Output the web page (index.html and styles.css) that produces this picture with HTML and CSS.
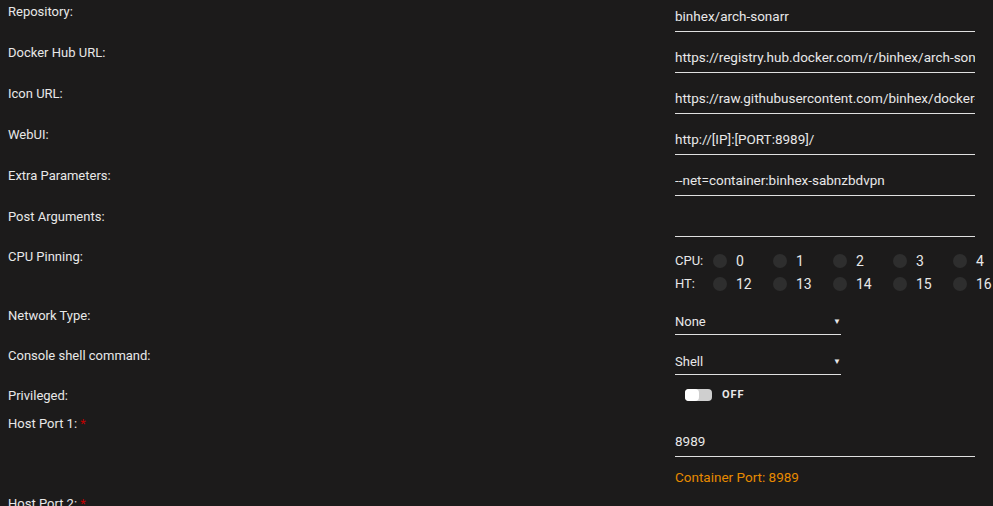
FILE: index.html
```html
<!DOCTYPE html>
<html lang="en">
<head>
  <meta charset="UTF-8" />
  <title>Update Container</title>
  <link rel="stylesheet" href="styles.css">
</head>
<body>
  <div class="form">
    <div class="row">
      <div class="label">Repository:</div>
      <div class="field"><input class="text" type="text" value="binhex/arch-sonarr"></div>
    </div>
    <div class="row">
      <div class="label">Docker Hub URL:</div>
      <div class="field"><input class="text" type="text" value="https://registry.hub.docker.com/r/binhex/arch-sonarr/"></div>
    </div>
    <div class="row">
      <div class="label">Icon URL:</div>
      <div class="field"><input class="text" type="text" value="https://raw.githubusercontent.com/binhex/docker-templates/master/binhex/images/sonarr-icon.png"></div>
    </div>
    <div class="row">
      <div class="label">WebUI:</div>
      <div class="field"><input class="text" type="text" value="http://[IP]:[PORT:8989]/"></div>
    </div>
    <div class="row">
      <div class="label">Extra Parameters:</div>
      <div class="field"><input class="text" type="text" value="--net=container:binhex-sabnzbdvpn"></div>
    </div>
    <div class="row">
      <div class="label">Post Arguments:</div>
      <div class="field"><input class="text" type="text" value=""></div>
    </div>

    <div class="row cpu-row">
      <div class="label">CPU Pinning:</div>
      <div class="field">
        <div class="cpu-line">
          <span class="cpu-name">CPU:</span>
          <span class="core"><i class="dot"></i>0</span>
          <span class="core"><i class="dot"></i>1</span>
          <span class="core"><i class="dot"></i>2</span>
          <span class="core"><i class="dot"></i>3</span>
          <span class="core"><i class="dot"></i>4</span>
        </div>
        <div class="cpu-line">
          <span class="cpu-name">HT:</span>
          <span class="core"><i class="dot"></i>12</span>
          <span class="core"><i class="dot"></i>13</span>
          <span class="core"><i class="dot"></i>14</span>
          <span class="core"><i class="dot"></i>15</span>
          <span class="core"><i class="dot"></i>16</span>
        </div>
      </div>
    </div>

    <div class="row select-row">
      <div class="label">Network Type:</div>
      <div class="field"><div class="select"><span>None</span><span class="arrow">&#9660;</span></div></div>
    </div>
    <div class="row select-row">
      <div class="label">Console shell command:</div>
      <div class="field"><div class="select"><span>Shell</span><span class="arrow">&#9660;</span></div></div>
    </div>

    <div class="row switch-row">
      <div class="label">Privileged:</div>
      <div class="field">
        <span class="switch"><span class="knob"></span></span>
        <span class="switch-text">OFF</span>
      </div>
    </div>

    <div class="row port-row">
      <div class="label">Host Port 1: <span class="req">*</span></div>
      <div class="field">
        <input class="text" type="text" value="8989">
        <div class="hint">Container Port: 8989</div>
      </div>
    </div>
    <div class="row port-row">
      <div class="label">Host Port 2: <span class="req">*</span></div>
      <div class="field"></div>
    </div>
  </div>
</body>
</html>
```

FILE: styles.css
```css
* { margin: 0; padding: 0; box-sizing: border-box; }

body {
  background: #1c1b1b;
  color: #e8e8e8;
  font-family: Roboto, "Noto Sans", sans-serif;
  font-size: 13px;
  overflow: hidden;
}

.row {
  display: grid;
  grid-template-columns: 675px 300px;
  height: 41px;
}

.label {
  padding-left: 8px;
  line-height: 24px;
}

.req { color: #c00000; }

.text {
  display: block;
  width: 300px;
  height: 32px;
  padding: 0;
  background: transparent;
  border: none;
  border-bottom: 1px solid #e0e0e0;
  color: #e8e8e8;
  font: inherit;
  font-size: 13.5px;
  outline: none;
}

/* CPU pinning */
.cpu-row { height: 58px; }
.cpu-row .label { line-height: 22px; }
.cpu-row .field { padding-top: 3px; }

.cpu-line {
  display: flex;
  align-items: center;
  height: 23px;
  white-space: nowrap;
}

.cpu-name { width: 38px; flex-shrink: 0; }

.core {
  display: flex;
  align-items: center;
  flex-shrink: 0;
  width: 60px;
  font-size: 14px;
}

.dot {
  flex-shrink: 0;
  width: 14px;
  height: 14px;
  border-radius: 50%;
  background: #2e2e2e;
  margin-right: 9px;
}

/* selects */
.select-row { height: 40px; }

.select {
  display: flex;
  justify-content: space-between;
  align-items: center;
  width: 166px;
  height: 31px;
  padding-top: 4px;
  padding-right: 0;
  border-bottom: 1px solid #e0e0e0;
}

.arrow { font-size: 8px; }

/* switch */
.switch-row { height: 28px; }

.switch-row .field {
  display: flex;
  align-items: center;
  height: 21px;
  padding-left: 10px;
}

.switch {
  display: block;
  position: relative;
  width: 27px;
  height: 12px;
  border-radius: 4px;
  background: #cfcfcf;
}

.knob {
  position: absolute;
  left: 0;
  top: 0;
  width: 14px;
  height: 12px;
  border-radius: 4px;
  background: #ffffff;
}

.switch-text {
  margin-left: 10px;
  font-size: 11px;
  font-weight: bold;
  letter-spacing: 1px;
}

/* ports */
.port-row { height: 80px; }

.port-row .text { margin-top: 14px; height: 31px; }

.hint {
  margin-top: 10px;
  line-height: 20px;
  font-size: 13.5px;
  color: #e68a00;
}
```
